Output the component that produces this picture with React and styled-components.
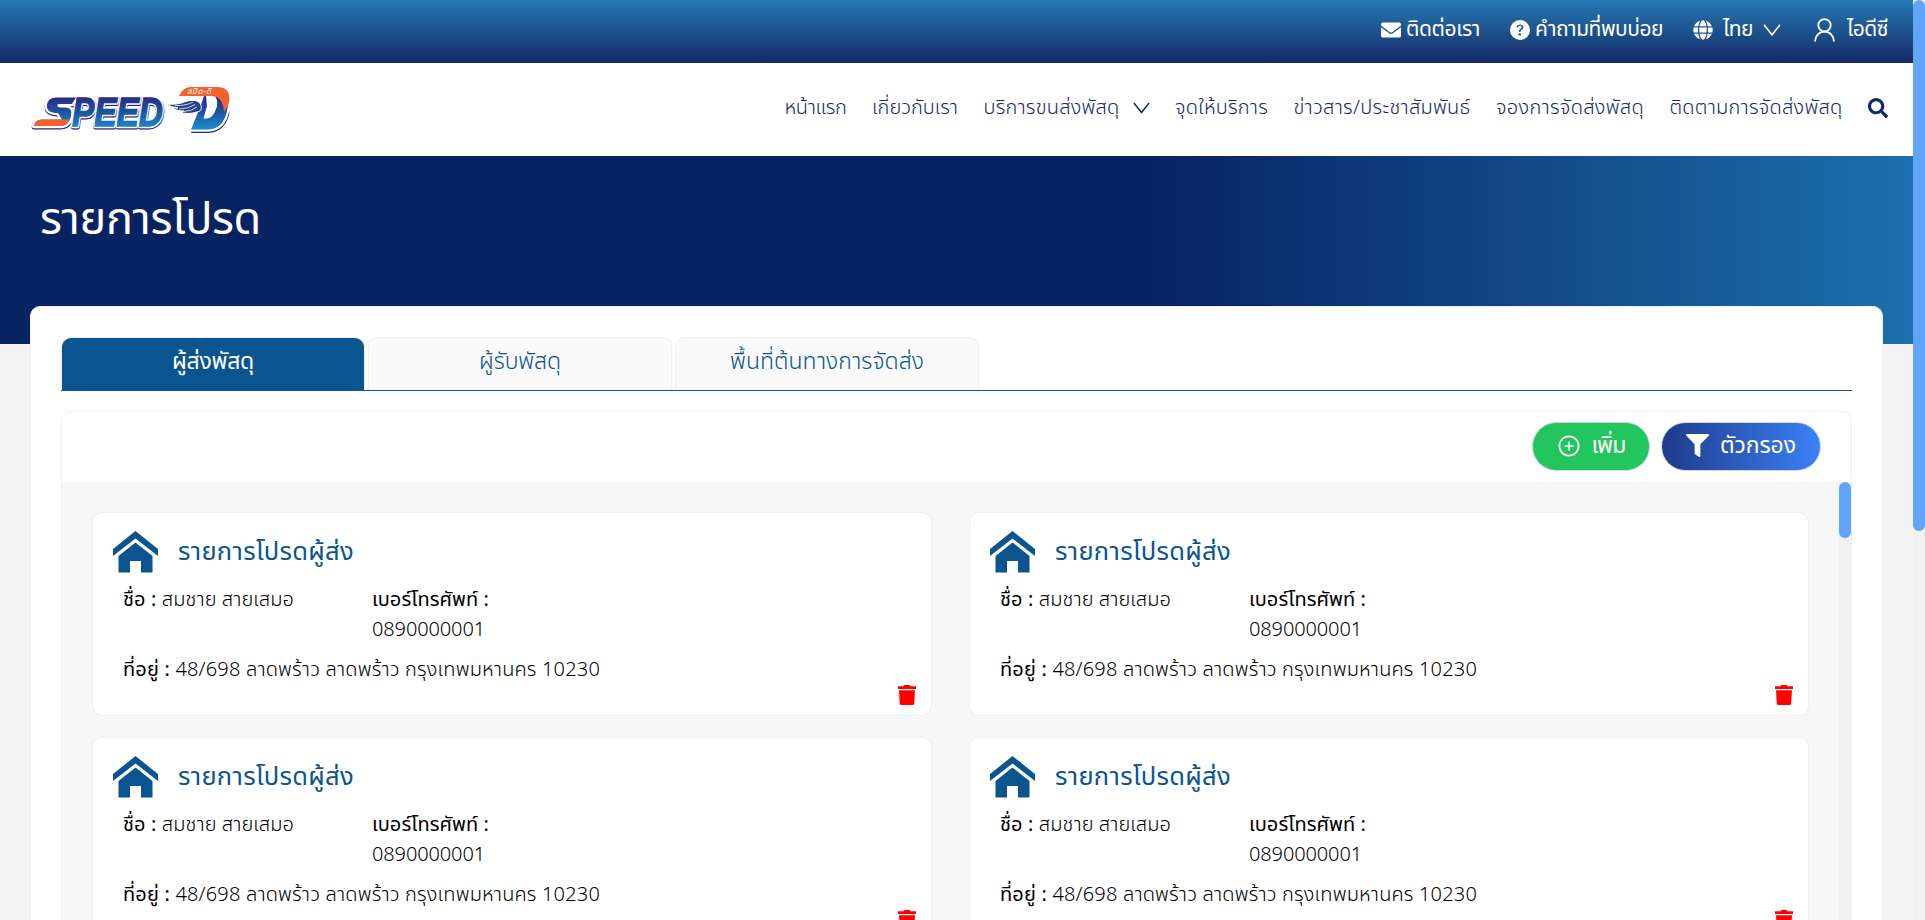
import React, { useLayoutEffect, useRef, useState } from 'react';
import styled, { createGlobalStyle } from 'styled-components';
import { FaEnvelope, FaGlobe, FaSearch, FaFilter } from 'react-icons/fa';
import { BsQuestionCircleFill } from 'react-icons/bs';
import { AiOutlinePlusCircle } from 'react-icons/ai';

const GlobalStyle = createGlobalStyle`
  * { box-sizing: border-box; }
  body {
    margin: 0;
    overflow: hidden;
    background: #f4f4f4;
    font-family: "Noto Sans Thai", "Noto Sans", sans-serif;
    font-size: 20px;
    font-weight: 340;
    line-height: 30px;
    color: #000;
  }
  svg { display: block; flex: none; }
`;

const Screen = styled.div`
  display: flex;
  height: 920px;
  overflow: hidden;
`;
const Page = styled.div`
  flex: 1;
  min-width: 0;
`;
const ScrollTrack = styled.div`
  width: 12px;
  flex: none;
  background: #f1f1f1;
`;
const ScrollThumb = styled.div`
  height: ${(p) => p.$size}px;
  border-radius: 6px;
  background: #60a5fa;
`;

const Measure = styled.span`
  display: inline-block;
  width: ${(p) => p.$w}px;
  flex: none;
  white-space: nowrap;
`;

/* Tracks a label so that its text fills the given width. */
function Fit({ w, children }) {
  const ref = useRef(null);
  const [tracking, setTracking] = useState(0);
  useLayoutEffect(() => {
    const natural = ref.current.getBoundingClientRect().width;
    const count = Array.from(
      new Intl.Segmenter('th', { granularity: 'grapheme' }).segment(ref.current.textContent)
    ).length;
    setTracking((w - natural) / count);
  }, [w]);
  return (
    <Measure $w={w}>
      <span ref={ref} style={{ letterSpacing: tracking }}>{children}</span>
    </Measure>
  );
}

const TopBar = styled.div`
  display: flex;
  justify-content: flex-end;
  align-items: center;
  gap: 30px;
  height: 63px;
  padding: 0 25px 3px 0;
  background: linear-gradient(#2779b3, #142a66);
  color: #fff;
  font-size: 21px;
  font-weight: 400;
`;
const TopItem = styled.div`
  display: flex;
  align-items: center;
  gap: ${(p) => p.$gap || 5}px;
`;
const Account = styled(TopItem)`
  margin-left: 3px;
`;

const Header = styled.header`
  display: flex;
  align-items: center;
  height: 93px;
  padding: 0 25px 0 30px;
  background: #fefefe;
  color: #142a66;
`;
const Nav = styled.nav`
  display: flex;
  align-items: center;
  gap: 25.5px;
  margin-left: auto;
  padding-bottom: 3px;
`;
const NavItem = styled.div`
  display: flex;
  align-items: center;
  gap: 13px;
`;

const Hero = styled.section`
  height: 188px;
  padding: 34px 40px;
  background: linear-gradient(90deg, #072362 0%, #072362 60%, #1c70ab 100%);
`;
const Title = styled.h1`
  margin: 0;
  font-size: 45px;
  font-weight: 420;
  line-height: 60px;
  color: #fff;
`;

const Sheet = styled.main`
  position: relative;
  height: 660px;
  margin: -38px 30px 0 30px;
  padding: 30px 30px 0;
  border: 1px solid #f0f0f0;
  border-radius: 10px 10px 0 0;
  background: #fff;
`;
const Tabs = styled.div`
  display: flex;
  gap: 3px;
  height: 54px;
  border-bottom: 1px solid #0a57a0;
`;
const Tab = styled.div`
  display: flex;
  align-items: center;
  justify-content: center;
  width: ${(p) => p.$w}px;
  padding-bottom: 4px;
  border: 1px solid #f0f0f0;
  border-bottom: 0;
  border-radius: 10px 10px 0 0;
  background: ${(p) => (p.$active ? '#0a5490' : '#fafafa')};
  color: ${(p) => (p.$active ? '#fff' : '#0a5490')};
  font-size: 23px;
  font-weight: ${(p) => (p.$active ? 400 : 360)};
`;

const Panel = styled.section`
  margin-top: 20px;
  border: 1px solid #f0f0f0;
  border-radius: 10px 10px 0 0;
  overflow: hidden;
`;
const Toolbar = styled.div`
  display: flex;
  justify-content: flex-end;
  gap: 11px;
  height: 70px;
  padding: 10px 30px 0 0;
`;
const Pill = styled.button`
  display: flex;
  align-items: center;
  justify-content: center;
  gap: 11px;
  width: ${(p) => p.$w}px;
  height: 49px;
  padding: 0 0 2px;
  border: 1px solid #d4d8dd;
  border-radius: 25px;
  background: ${(p) => p.$bg};
  background-origin: border-box;
  color: #fff;
  font: 400 23px/30px "Noto Sans Thai", "Noto Sans", sans-serif;
`;
const ListArea = styled.div`
  display: flex;
  height: 500px;
  background: #f7f7f7;
`;
const Cards = styled.div`
  flex: 1;
  display: grid;
  grid-template-columns: 840px 840px;
  grid-auto-rows: 204px;
  gap: 21px 37px;
  padding: 30px 0 0 30px;
`;
const Card = styled.article`
  display: flex;
  flex-direction: column;
  padding: 18px 15px 9px 20px;
  border: 1px solid #eee;
  border-radius: 10px;
  background: #fff;
`;
const CardHead = styled.div`
  display: flex;
  align-items: center;
  gap: 20px;
  height: 42px;
  color: #0a5490;
  font-size: 25.5px;
  font-weight: 400;
`;
const Facts = styled.div`
  display: grid;
  grid-template-columns: 249px 120px;
  gap: 10px 0;
  padding: 12px 0 0 10px;
`;
const Fact = styled.div`
  grid-column: ${(p) => (p.$wide ? '1 / 3' : 'auto')};
  white-space: nowrap;
  b { font-weight: 400; }
`;
const CardFoot = styled.div`
  display: flex;
  justify-content: flex-end;
`;

const Chevron = ({ w }) => (
  <svg width={w} height="12" viewBox="0 0 18 12" fill="none" stroke="currentColor" strokeWidth="1.6">
    <path d="M1 .8 9 10.800 17 .8" />
  </svg>
);
const UserIcon = () => (
  <svg width="21" height="24" viewBox="0 0 21 24" fill="none" stroke="#fff" strokeWidth="1.8">
    <circle cx="10.500" cy="7.300" r="6.200" />
    <path d="M1 23.500C1 18 5 13.700 10.500 13.700S20 18 20 23.500" />
  </svg>
);
const House = () => (
  <svg width="45" height="42" viewBox="0 0 45 42" fill="#0a5490">
    <path d="M22.500 0 45 18V25L22.500 7.500 0 25V18Z" />
    <path d="M22.500 11.500 39.500 25V41.500H28V30H17V41.500H5.500V25Z" />
  </svg>
);
const Trash = () => (
  <svg width="18" height="20" viewBox="0 0 18 20" fill="red">
    <path d="M0 1.300H5.500L6.300 0H11.700L12.500 1.300H18V4H0Z" />
    <path d="M1 5.200H17L16.200 18.500Q16.100 20 14.600 20H3.400Q1.900 20 1.800 18.500Z" />
  </svg>
);

const Logo = () => (
  <svg width="206" height="64" viewBox="30 79 206 64" fontFamily="Liberation Sans, sans-serif" fontWeight="700" fontStyle="italic">
    <defs>
      <linearGradient id="ink" gradientUnits="userSpaceOnUse" x1="0" y1="98" x2="0" y2="128">
        <stop offset="0" stopColor="#2b2a86" />
        <stop offset=".45" stopColor="#1d4f9d" />
        <stop offset="1" stopColor="#1a86cb" />
      </linearGradient>
      <path id="swoosh" d="M34 127Q35 120.500 42 120.500H62L58 114Q46 114 47 106 48 98.500 56 98.500H76L72 105H58Q56 107.500 60 108.500H66Q73 109 71 117 69 127 60 127Z" />
      <path id="dee" fillRule="evenodd" d="M201 106L191 130.500H208Q223 130 227 112 229 104 228 97H204ZM206 97H215Q219 103 216 110 213 119 207 119.500H203.500L207 107Z" />
    </defs>
    <g stroke="#25276e" strokeWidth="5" strokeLinejoin="round" fill="#25276e" transform="translate(.2 1)">
      <use href="#swoosh" />
      <text x="72" y="127" fontSize="40" textLength="91" lengthAdjust="spacingAndGlyphs">PEED</text>
      <path d="M191 130.500H208Q223 130 227 112" fill="none" />
    </g>
    <g stroke="#fff" strokeWidth="4.500" strokeLinejoin="round" fill="#fff">
      <use href="#swoosh" />
      <text x="72" y="127" fontSize="40" textLength="91" lengthAdjust="spacingAndGlyphs">PEED</text>
      <use href="#dee" />
    </g>
    <use href="#swoosh" fill="url(#ink)" />
    <path d="M34 127Q35 120.500 42 120.500H70Q67 127 60 127Z" fill="#f4622d" />
    <text x="72" y="127" fontSize="40" textLength="91" lengthAdjust="spacingAndGlyphs" fill="url(#ink)" stroke="url(#ink)" strokeWidth="1.400">PEED</text>
    <use href="#dee" fill="url(#ink)" />
    <path d="M179 97Q183 88 191 88H217Q229 88 229.500 99 229 107 224 113 223 97 211 97Z" fill="#f4622d" />
    <text x="187" y="95" fontSize="8" fontWeight="400" fill="#fff" fontFamily="Noto Sans Thai, sans-serif" textLength="24">สปีด-ดี</text>
    <path d="M167 105Q178 106 184 103 195 99 200 104 204 112 197 113 187 116 180 113L184 112Q176 112 173 109L178 109Q170 108 167 105Z" fill="#24418c" stroke="#fff" strokeWidth="1" />
    <path d="M175 106.500Q186 107 193 103M179 110Q188 110 195 105.500M184 112.500Q192 112 197 108" fill="none" stroke="#dce8f6" strokeWidth=".9" />
  </svg>
);

const navLinks = [
  ['หน้าแรก', 62],
  ['เกี่ยวกับเรา', 86],
  ['บริการขนส่งพัสดุ', 136, true],
  ['จุดให้บริการ', 93],
  ['ข่าวสาร/ประชาสัมพันธ์', 177],
  ['จองการจัดส่งพัสดุ', 148],
  ['ติดตามการจัดส่งพัสดุ', 173],
];

const favourites = Array.from({ length: 4 }, (_, id) => ({
  id,
  title: 'รายการโปรดผู้ส่ง',
  name: 'สมชาย สายเสมอ',
  phone: '0890000001',
  address: '48/698 ลาดพร้าว ลาดพร้าว กรุงเทพมหานคร 10230',
}));

export default function App() {
  return (
    <Screen>
      <GlobalStyle />
      <Page>
        <TopBar>
          <TopItem><FaEnvelope size={20} /><Fit w={74}>ติดต่อเรา</Fit></TopItem>
          <TopItem><BsQuestionCircleFill size={20} /><Fit w={128}>คำถามที่พบบ่อย</Fit></TopItem>
          <TopItem $gap={10}><FaGlobe size={20} /><Fit w={30}>ไทย</Fit><Chevron w={18} /></TopItem>
          <Account $gap={12}><UserIcon /><Fit w={41}>ไอดีซี</Fit></Account>
        </TopBar>
        <Header>
          <Logo />
          <Nav>
            {navLinks.map(([label, w, menu]) => (
              <NavItem key={label}><Fit w={w}>{label}</Fit>{menu && <Chevron w={17} />}</NavItem>
            ))}
            <FaSearch size={20} />
          </Nav>
        </Header>
        <Hero>
          <Title><Fit w={221}>รายการโปรด</Fit></Title>
        </Hero>
        <Sheet>
          <Tabs>
            <Tab $w={304} $active><Fit w={82}>ผู้ส่งพัสดุ</Fit></Tab>
            <Tab $w={304}><Fit w={82}>ผู้รับพัสดุ</Fit></Tab>
            <Tab $w={304}><Fit w={194}>พื้นที่ต้นทางการจัดส่ง</Fit></Tab>
          </Tabs>
          <Panel>
            <Toolbar>
              <Pill $w={118} $bg="#22c55e"><AiOutlinePlusCircle size={24} /><Fit w={34}>เพิ่ม</Fit></Pill>
              <Pill $w={160} $bg="linear-gradient(90deg, #1e3a8a, #3b82f6)"><FaFilter size={23} /><Fit w={76}>ตัวกรอง</Fit></Pill>
            </Toolbar>
            <ListArea>
              <Cards>
                {favourites.map((f) => (
                  <Card key={f.id}>
                    <CardHead><House /><Fit w={176}>{f.title}</Fit></CardHead>
                    <Facts>
                      <Fact><Fit w={171}><b>ชื่อ :</b> {f.name}</Fit></Fact>
                      <Fact><b><Fit w={117}>เบอร์โทรศัพท์ :</Fit></b><br /><Fit w={113}>{f.phone}</Fit></Fact>
                      <Fact $wide><Fit w={477}><b>ที่อยู่ :</b> {f.address}</Fit></Fact>
                    </Facts>
                    <CardFoot><Trash /></CardFoot>
                  </Card>
                ))}
              </Cards>
              <ScrollTrack><ScrollThumb $size={56} /></ScrollTrack>
            </ListArea>
          </Panel>
        </Sheet>
      </Page>
      <ScrollTrack><ScrollThumb $size={531} /></ScrollTrack>
    </Screen>
  );
}
